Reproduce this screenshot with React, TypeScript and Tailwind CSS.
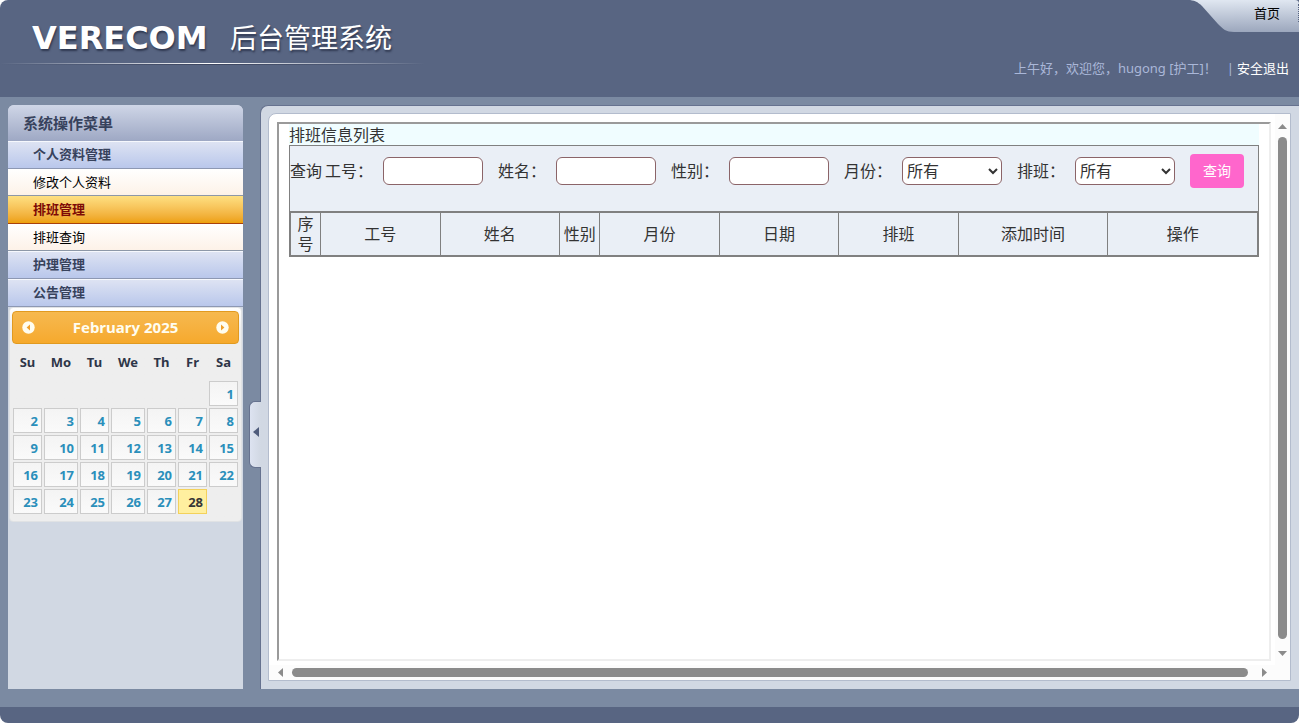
import { useState } from 'react';
import type { ReactNode } from 'react';
import { cva } from 'class-variance-authority';
import clsx from 'clsx';

interface MenuItem {
  label: string;
  kind: 'group' | 'link' | 'active';
}

const menuItems: MenuItem[] = [
  { label: '个人资料管理', kind: 'group' },
  { label: '修改个人资料', kind: 'link' },
  { label: '排班管理', kind: 'active' },
  { label: '排班查询', kind: 'link' },
  { label: '护理管理', kind: 'group' },
  { label: '公告管理', kind: 'group' },
];

const columns = [
  { label: '序号', width: 'w-[30px]' },
  { label: '工号', width: 'w-[119px]' },
  { label: '姓名', width: 'w-[119px]' },
  { label: '性别', width: 'w-[40px]' },
  { label: '月份', width: 'w-[119px]' },
  { label: '日期', width: 'w-[119px]' },
  { label: '排班', width: 'w-[119px]' },
  { label: '添加时间', width: 'w-[149px]' },
  { label: '操作', width: 'w-[149px]' },
];

const weekDays = [
  { label: 'Su', width: 'w-[31px]' },
  { label: 'Mo', width: 'w-[36px]' },
  { label: 'Tu', width: 'w-[31px]' },
  { label: 'We', width: 'w-[36px]' },
  { label: 'Th', width: 'w-[31px]' },
  { label: 'Fr', width: 'w-[31px]' },
  { label: 'Sa', width: 'w-[31px]' },
];

const FIRST_WEEKDAY = 6;
const DAYS = 28;
const TODAY = 28;

const menuItem = cva('block w-full border-b pl-[25px] pt-px text-left text-[13px]', {
  variants: {
    kind: {
      group:
        'h-7 border-[#8d98b3] bg-linear-to-b from-[#dfe4f3] to-[#b9c7eb] font-bold text-[#37425c] shadow-[inset_0_1px_0_#f6f8fd]',
      link: 'h-[27px] border-[#8d98a8] bg-linear-to-b from-white to-[#fdf2e8] text-black',
      active: 'h-7 border-[#a8400c] bg-linear-to-b from-[#fee081] to-[#eda006] font-bold text-[#7d0a06]',
    },
  },
});

const Header = () => (
  <header className="flex h-[97px] justify-between rounded-tl-lg bg-[#586582]">
    <div className="w-[425px] pt-4">
      <h1 className="flex h-11 items-center pl-8 text-white [text-shadow:1px_2px_2px_#2f3850]">
        <span className="w-[198px] font-['DejaVu_Sans'] text-[32px] font-bold">VERECOM</span>
        <span className="text-[27px] whitespace-nowrap">后台管理系统</span>
      </h1>
      <div className="mt-[3px] h-px bg-linear-to-r from-transparent via-white to-transparent" />
      <div className="h-px bg-linear-to-r from-transparent via-[#3d4660] to-transparent" />
    </div>
    <div className="flex flex-col items-end">
      <div className="flex h-8">
        <svg width="46" height="32" viewBox="0 0 46 32">
          <defs>
            <linearGradient id="tab" x1="0" y1="0" x2="0" y2="1">
              <stop offset="0" stopColor="#e0e7f1" />
              <stop offset="1" stopColor="#9ca7bd" />
            </linearGradient>
          </defs>
          <path d="M0 0C6 0 10 2 14 6L30 24C35 29 38 32 46 32V0Z" fill="url(#tab)" />
        </svg>
        <nav className="flex w-[65px] items-start justify-end rounded-tr bg-linear-to-b from-[#e0e7f1] to-[#9ca7bd] pt-1">
          <a href="#" className="mr-[18px] text-[13px] leading-[18px] text-black">首页</a>
          <span className="h-[18px] border-l border-dotted border-[#586582]" />
        </nav>
      </div>
      <div className="mt-[27px] mr-[10px] flex text-[13px] leading-[18px]">
        <span className="text-[#aab7d8]">上午好，欢迎您，hugong [护工]！</span>
        <span className="ml-[10px] text-[#aab7d8]">|</span>
        <a href="#" className="ml-[3px] text-white">安全退出</a>
      </div>
    </div>
  </header>
);

const ArrowButton = ({ label, left }: { label: string; left?: boolean }) => (
  <button type="button" aria-label={label} className="mx-[9px]">
    <svg width="13" height="13" viewBox="0 0 13 13">
      <circle cx="6.5" cy="6.5" r="6.2" fill="#fffdf0" />
      <path d={left ? 'M8 3.5V9.5L4.6 6.5Z' : 'M5 3.5V9.5L8.4 6.5Z'} fill="#f0a02c" />
    </svg>
  </button>
);

const Calendar = () => {
  const cells = Array.from({ length: 35 }, (_, i) => {
    const day = i - FIRST_WEEKDAY + 1;
    return day > 0 && day <= DAYS ? day : null;
  });
  const weeks = [0, 1, 2, 3, 4].map((w) => cells.slice(w * 7, w * 7 + 7));

  return (
    <div className="mx-px rounded border border-[#e0e2e4] bg-linear-to-b from-white to-[#eeeeee] to-10% px-[2px] pt-[3px] pb-[6px] font-['Noto_Sans','Noto_Sans_CJK_SC',sans-serif] text-[13px] font-bold">
      <div className="flex h-[33px] items-center justify-between rounded border border-[#e19a20] bg-linear-to-b from-[#f6b94f] to-[#f6a92c]">
        <ArrowButton label="Prev" left />
        <span className="text-[15px] text-[#fffdf0]">February 2025</span>
        <ArrowButton label="Next" />
      </div>
      <table className="w-full table-fixed border-collapse">
        <thead>
          <tr className="h-9 text-[#2e3648]">
            {weekDays.map((d) => (
              <th key={d.label} className={clsx('pt-0.5', d.width)}>{d.label}</th>
            ))}
          </tr>
        </thead>
        <tbody>
          {weeks.map((week, w) => (
            <tr key={w}>
              {week.map((day, i) => (
                <td key={i} className="h-[27px] p-px">
                  {day && (
                    <a
                      href="#"
                      className={clsx(
                        'block h-[25px] border pr-[3px] text-right leading-6',
                        day === TODAY
                          ? 'border-[#f3d15b] bg-[#ffef9f] text-[#363636]'
                          : 'border-[#cccccc] bg-linear-to-b from-[#f4f4f4] to-[#fafafa] text-[#2a8fbb]'
                      )}
                    >
                      {day}
                    </a>
                  )}
                </td>
              ))}
            </tr>
          ))}
        </tbody>
      </table>
    </div>
  );
};

const Sidebar = () => (
  <aside className="w-[235px] shrink-0 rounded-t-md bg-[#d1d8e3]">
    <h2 className="h-9 rounded-t-md bg-linear-to-b from-[#cfd6e7] to-[#9ea8c4] pl-[15px] text-[15px] leading-9 font-bold text-[#37425c]">
      系统操作菜单
    </h2>
    <nav>
      {menuItems.map((item) => (
        <button key={item.label} type="button" className={menuItem({ kind: item.kind })}>
          {item.label}
        </button>
      ))}
    </nav>
    <Calendar />
  </aside>
);

const Field = ({ id, label, children }: { id: string; label: string; children: ReactNode }) => (
  <div className="mr-[15px] flex items-center">
    <label htmlFor={id} className="mr-[10px] w-12 whitespace-nowrap">{label}：</label>
    {children}
  </div>
);

const fieldClass = 'h-7 w-[100px] rounded-md border border-[#8b6468] bg-white';

const SearchForm = () => {
  const [month, setMonth] = useState('all');
  const [shift, setShift] = useState('all');

  return (
    <form className="flex h-[65px] items-start pt-2" onSubmit={(e) => e.preventDefault()}>
      <div className="flex h-[34px] items-center">
        <span className="mr-[3px] whitespace-nowrap">查询</span>
        <Field id="no" label="工号">
          <input id="no" type="text" className={fieldClass} />
        </Field>
        <Field id="name" label="姓名">
          <input id="name" type="text" className={fieldClass} />
        </Field>
        <Field id="sex" label="性别">
          <input id="sex" type="text" className={fieldClass} />
        </Field>
        <Field id="month" label="月份">
          <select id="month" value={month} onChange={(e) => setMonth(e.target.value)} className={fieldClass}>
            <option value="all">所有</option>
          </select>
        </Field>
        <Field id="shift" label="排班">
          <select id="shift" value={shift} onChange={(e) => setShift(e.target.value)} className={fieldClass}>
            <option value="all">所有</option>
          </select>
        </Field>
        <button type="submit" className="h-[34px] w-[54px] rounded bg-[#ff66cc] text-sm text-white">
          查询
        </button>
      </div>
    </form>
  );
};

const Schedule = () => (
  <section className="flex-1 border-2 border-t-[#9a9a9a] border-r-[#eeeeee] border-b-[#eeeeee] border-l-[#9a9a9a] bg-white px-[10px] text-base text-[#333333]">
    <h2 className="h-[21px] bg-[#f0fdff] leading-[22px]">排班信息列表</h2>
    <div className="border border-[#808080] bg-[#eaeff6]">
      <SearchForm />
      <table className="w-full table-fixed border-separate border-spacing-0 border-t border-l border-[#808080]">
        <thead>
          <tr className="h-11">
            {columns.map((c) => (
              <th
                key={c.label}
                className={clsx('border-t border-r border-b border-[#808080] px-[3px] leading-5 font-normal', c.width)}
              >
                {c.label}
              </th>
            ))}
          </tr>
        </thead>
      </table>
    </div>
  </section>
);

const App = () => (
  <div className="flex min-h-screen flex-col bg-white font-['Noto_Sans','Noto_Sans_CJK_SC',sans-serif]">
    <Header />
    <div className="flex flex-1 bg-[#7b8aa2] pt-2 pb-[18px] pl-2">
      <Sidebar />
      <div className="flex w-[17px] shrink-0 justify-end">
        <button
          type="button"
          aria-label="收起菜单"
          className="z-10 -mr-px mt-[296px] flex h-[67px] w-3 items-center justify-end rounded-l-md border border-r-0 border-[#66728f] bg-linear-to-r from-[#dde3f1] to-[#d1d8e3] pr-0.5 pb-[6px]"
        >
          <svg width="6" height="10" viewBox="0 0 6 10">
            <path d="M6 0V10L0 5Z" fill="#4f5c7c" />
          </svg>
        </button>
      </div>
      <main className="flex min-w-0 flex-1 rounded-tl-lg border-t border-l border-[#66728f] bg-[#d1d8e3] pt-[7px] pr-2 pb-2 pl-[7px]">
        <div className="flex min-w-0 flex-1 rounded-tl-lg border border-[#b3bccd] bg-white">
          <div className="flex min-w-0 flex-1 flex-col pt-2">
            <div className="flex flex-1 pr-1 pl-2">
              <Schedule />
            </div>
            {/* horizontal scrollbar */}
            <div className="mt-1 flex h-[15px] items-center bg-[#fcfcfc] pr-2 pl-[9px]">
              <svg width="5" height="9" viewBox="0 0 5 9">
                <path d="M5 0V9L0 4.5Z" fill="#8b8b8b" />
              </svg>
              <div className="mr-[14px] ml-[9px] h-[9px] flex-1 rounded-full bg-[#8b8b8b]" />
              <svg width="5" height="9" viewBox="0 0 5 9">
                <path d="M0 0V9L5 4.5Z" fill="#8b8b8b" />
              </svg>
            </div>
          </div>
          {/* vertical scrollbar */}
          <div className="flex w-[15px] shrink-0 flex-col items-center bg-[#fcfcfc] pt-[10px] pb-6">
            <svg width="9" height="5" viewBox="0 0 9 5">
              <path d="M0 5H9L4.5 0Z" fill="#8b8b8b" />
            </svg>
            <div className="mt-2 mb-3 w-[9px] flex-1 rounded-full bg-[#8b8b8b]" />
            <svg width="9" height="5" viewBox="0 0 9 5">
              <path d="M0 0H9L4.5 5Z" fill="#8b8b8b" />
            </svg>
          </div>
        </div>
      </main>
    </div>
    <footer className="bg-white">
      <div className="h-4 rounded-b-lg bg-[#586582]" />
    </footer>
  </div>
);

export default App;
